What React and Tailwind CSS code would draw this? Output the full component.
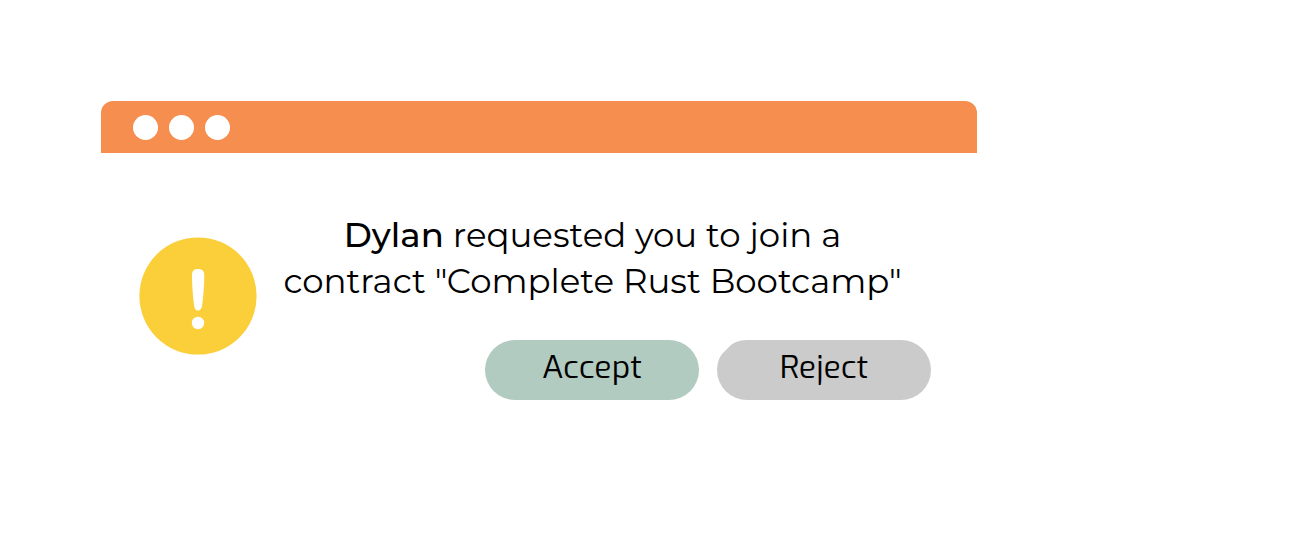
export default function App() {
  return (
    <main className="min-h-screen bg-white px-[101px] pt-[101px] text-black">
      <section className="w-full max-w-[876px]" aria-label="Contract request">
        <header className="flex h-[52px] items-center gap-[11px] rounded-t-[12px] bg-[#f58e4f] px-8">
          <span className="size-[25px] rounded-full bg-white" />
          <span className="size-[25px] rounded-full bg-white" />
          <span className="size-[25px] rounded-full bg-white" />
        </header>
        <div className="flex items-start pt-[59px] pr-[46px] pl-[38px]">
          <svg className="mt-[25px] size-[118px] shrink-0" viewBox="0 0 118 118" aria-hidden="true">
            <circle cx="59" cy="59" r="58.600" fill="#fbcf3a" />
            <path d="M53 38C53 34 55 32 59 32S65.300 34 65.300 38C65.300 48 64.300 60 63.300 67.500C62.700 71.500 61.500 73.500 59 73.500S55.500 71.500 55 67.500C54 60 53 48 53 38Z" fill="white" />
            <circle cx="59" cy="86" r="6.200" fill="white" />
          </svg>
          <div className="flex grow flex-col">
            <p className="pr-[16px] pl-[13px] text-center font-['Montserrat','Open_Sans',sans-serif] text-[34px] leading-[46px] font-normal">
              <span className="font-medium">Dylan</span> requested you to join a<br />
              contract "Complete Rust Bootcamp"
            </p>
            <div className="mt-9 flex justify-end gap-[18px] font-['Exo','Exo_2','Open_Sans',sans-serif] text-[32px] font-normal">
              <button className="flex h-[60px] w-[214px] items-center justify-center rounded-full bg-[#b1cbc0] pb-[6px]">Accept</button>
              <button className="flex h-[60px] w-[214px] items-center justify-center rounded-full bg-[#cbcbcb] pb-[6px] [clip-path:polygon(19px_0,100%_0,100%_100%,0_100%,0_19px)]">Reject</button>
            </div>
          </div>
        </div>
      </section>
    </main>
  );
}
